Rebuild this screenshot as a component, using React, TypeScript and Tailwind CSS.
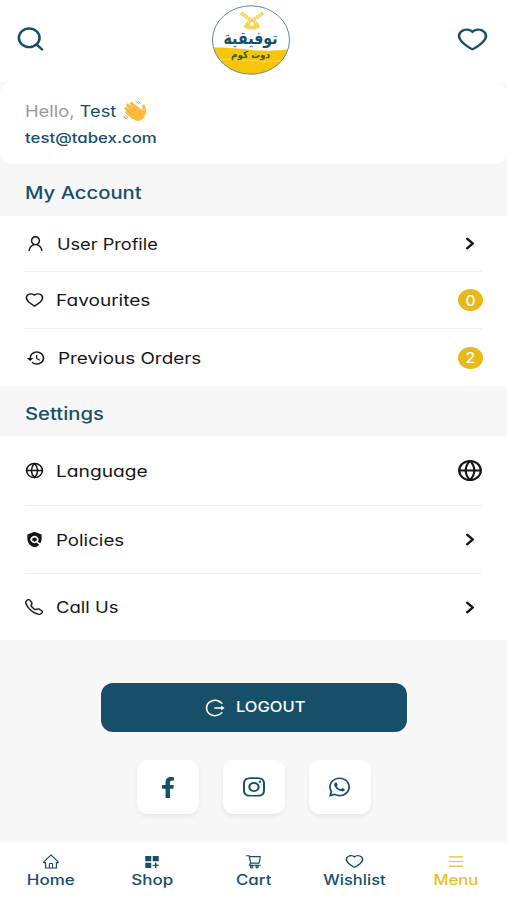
import { ReactNode } from 'react'
import type { IconType } from 'react-icons'
import { AiOutlineHeart, AiOutlineHome, AiOutlineLogout, AiOutlineMenu, AiOutlineShoppingCart, AiOutlineUser } from 'react-icons/ai'
import { BsTelephone } from 'react-icons/bs'
import { FaFacebookF, FaInstagram, FaWhatsapp } from 'react-icons/fa'
import { FiChevronRight, FiGlobe, FiSearch } from 'react-icons/fi'
import { MdDashboardCustomize, MdHistory, MdPolicy } from 'react-icons/md'

type Row = { label: string; Icon: IconType; icon: string; text: string; row: string; right: ReactNode }

const chevron = <FiChevronRight preserveAspectRatio="none" strokeWidth={3} className="w-[22px] h-[19px] mr-[1px]" />

const ACCOUNT: Row[] = [
  { label: 'User Profile', Icon: AiOutlineUser, icon: 'w-[19px] h-[19px] ml-[1px]', text: 'ml-[12px] scale-x-[1.135]', row: 'h-[56px]', right: chevron },
  { label: 'Favourites', Icon: AiOutlineHeart, icon: 'w-[21px] h-[18px] -ml-[1px]', text: 'ml-[11px] scale-x-[1.19]', row: 'h-[57px]', right: <Badge value={0} /> },
  { label: 'Previous Orders', Icon: MdHistory, icon: 'w-[20px] h-[18px] ml-[1px]', text: 'ml-[12px] scale-x-[1.18]', row: 'h-[57px]', right: <Badge value={2} /> },
]

const SETTINGS: Row[] = [
  { label: 'Language', Icon: FiGlobe, icon: 'w-[19px] h-[17px]', text: 'ml-[12px] scale-x-[1.2]', row: 'h-[70px]', right: <FiGlobe preserveAspectRatio="none" className="w-[26px] h-[23px] -mr-[1px]" /> },
  { label: 'Policies', Icon: MdPolicy, icon: 'w-[19px] h-[17px]', text: 'ml-[12px] scale-x-[1.17]', row: 'h-[68px]', right: chevron },
  { label: 'Call Us', Icon: BsTelephone, icon: 'w-[18px] h-[16px] stroke-current stroke-[0.35]', text: 'ml-[13px] scale-x-[1.155]', row: 'h-[66px]', right: chevron },
]

const TABS = [
  { label: 'Home', Icon: AiOutlineHome, icon: 'w-[18px] h-[17px]', text: 'scale-x-[1.21]' },
  { label: 'Shop', Icon: MdDashboardCustomize, icon: 'w-[18px] h-[16px]', text: 'scale-x-[1.21]' },
  { label: 'Cart', Icon: AiOutlineShoppingCart, icon: 'w-[17px] h-[17px]', text: 'scale-x-[1.21]' },
  { label: 'Wishlist', Icon: AiOutlineHeart, icon: 'w-[21px] h-[17px]', text: 'scale-x-[1.18]' },
  { label: 'Menu', Icon: AiOutlineMenu, icon: 'w-[18px] h-[15px]', text: 'scale-x-[1.18]', active: true },
]

const SOCIALS = [
  { Icon: FaFacebookF, icon: 'w-[14px] h-[21px]' },
  { Icon: FaInstagram, icon: 'w-[22px] h-[22px]' },
  { Icon: FaWhatsapp, icon: 'w-[21px] h-[22px]' },
]

export default function App() {
  return (
    <div className="w-[507px] h-[900px] flex flex-col overflow-hidden bg-[#f7f7f7] text-[#161616] font-['Inter','Liberation_Sans',sans-serif] [font-feature-settings:'cv11']">
      <header className="h-[82px] shrink-0 bg-white flex items-center justify-between pl-[15px] pr-[17px] pb-[4px] text-[#174f68]">
        <FiSearch preserveAspectRatio="none" className="w-[31px] h-[28px]" />
        <Logo />
        <AiOutlineHeart preserveAspectRatio="none" className="w-[35px] h-[29px]" />
      </header>

      <section className="h-[82px] shrink-0 bg-white rounded-[12px] px-[25px] pt-[17px] text-[#174f68]">
        <div className="flex items-center h-[24px] text-[16px]">
          <span className="w-[98px]">
            <span className="inline-block origin-left scale-x-[1.145] whitespace-nowrap"><span className="text-[#999]">Hello,</span> Test</span>
          </span>
          <WavingHand />
        </div>
        <p className="mt-[5px] text-[14px] leading-[20px] font-medium origin-left scale-x-[1.2]">test@tabex.com</p>
      </section>

      <SectionTitle className="h-[52px] pt-[7px]">My Account</SectionTitle>
      <List rows={ACCOUNT} />
      <SectionTitle className="h-[50px] pt-[7px]">Settings</SectionTitle>
      <List rows={SETTINGS} />

      <div className="flex-1 flex flex-col items-center pt-[43px]">
        <button className="w-[306px] h-[49px] rounded-[12px] bg-[#174f68] text-white flex items-center justify-center pr-[4px]">
          <AiOutlineLogout preserveAspectRatio="none" className="w-[22px] h-[20px]" />
          <span className="ml-[10px] text-[15px] font-medium origin-left scale-x-[1.1]">LOGOUT</span>
        </button>
        <div className="flex gap-[24px] mt-[28px]">
          {SOCIALS.map(({ Icon, icon }, i) => (
            <div key={i} className="w-[62px] h-[54px] rounded-[11px] bg-white flex items-center justify-center text-[#174f68] shadow-[0_3px_4px_rgba(0,0,0,0.06)]">
              <Icon preserveAspectRatio="none" className={icon} />
            </div>
          ))}
        </div>
      </div>

      <nav className="h-[58px] shrink-0 bg-white flex pt-[11px]">
        {TABS.map(({ label, Icon, icon, text, active }) => (
          <div key={label} className={`flex-1 flex flex-col items-center ${active ? 'text-[#ecbd25]' : 'text-[#174f68]'}`}>
            <span className="h-[17px] flex items-center">
              <Icon preserveAspectRatio="none" className={icon} />
            </span>
            <span className={`text-[14px] leading-[19px] font-medium ${text}`}>{label}</span>
          </div>
        ))}
      </nav>
    </div>
  )
}

function SectionTitle({ className, children }: { className: string; children: ReactNode }) {
  return (
    <div className={`shrink-0 flex items-center pl-[25px] text-[#174f68] ${className}`}>
      <h2 className="text-[17px] font-medium origin-left scale-x-[1.19]">{children}</h2>
    </div>
  )
}

function List({ rows }: { rows: Row[] }) {
  return (
    <div className="shrink-0 bg-white px-[25px]">
      {rows.map(({ label, Icon, icon, text, row, right }, i) => (
        <div key={label} className={`flex items-center ${row} ${i < rows.length - 1 ? 'border-b border-[#eeeeee]' : ''}`}>
          <Icon preserveAspectRatio="none" className={icon} />
          <span className={`text-[16px] origin-left ${text}`}>{label}</span>
          <span className="ml-auto">{right}</span>
        </div>
      ))}
    </div>
  )
}

function Badge({ value }: { value: number }) {
  return (
    <span className="flex w-[25px] h-[22px] -mr-[1px] items-center justify-center rounded-[50%] bg-[#e9b91c] text-white text-[14px] font-medium">
      <span className="scale-x-[1.12]">{value}</span>
    </span>
  )
}

function Logo() {
  return (
    <svg viewBox="0 0 80 72" className="w-[80px] h-[72px] mt-[2px]">
      <clipPath id="badge"><ellipse cx="40" cy="36" rx="38.5" ry="34.2" /></clipPath>
      <g clipPath="url(#badge)">
        <rect width="80" height="72" fill="#fff" />
        <path d="M0 43.500C20 43 34 46 50 46.500S70 46 80 45.500V72H0Z" fill="#f8c50b" />
        <path d="M4 55Q28 56 48 57T78 55.500" fill="none" stroke="#ffdc63" strokeWidth="0.8" />
      </g>
      <ellipse cx="40" cy="36" rx="38.500" ry="34.200" fill="none" stroke="#5c8d91" strokeWidth="1" />
      <g stroke="#f8d35c" strokeWidth="3.800" fill="none" strokeDasharray="2.400 .5">
        <path d="M30 9L47 21M52 9L35 21" />
      </g>
      <path d="M32 23L35 19H47L49 23Q41 28 32 23Z" fill="#f8d35c" />
      <circle cx="41" cy="20" r="2" fill="#fff" />
      <text x="39.500" y="40" textAnchor="middle" textLength="54" lengthAdjust="spacingAndGlyphs" fontSize="17" fontWeight="700" fontFamily="'DejaVu Sans', sans-serif" fill="#174f68">توفيقية</text>
      <text x="39.500" y="54" textAnchor="middle" textLength="39" lengthAdjust="spacingAndGlyphs" fontSize="10" fontWeight="700" fontFamily="'DejaVu Sans', sans-serif" fill="#39592f">دوت كوم</text>
    </svg>
  )
}

function WavingHand() {
  return (
    <svg viewBox="0 0 24 22" className="w-[24px] h-[22px]" fill="none" strokeLinecap="round">
      <path d="M7 8L14 6L18 10L22 8Q23.500 16 19.500 19Q15 23 10.500 19L6 14Z" fill="#fbbd3b" />
      <g stroke="#fbbd3b" strokeWidth="3">
        <path d="M4 12.500L10 17.500M2.800 8.500L11 15M4.500 5L13 12M8.500 3.500L16 10M20.500 6Q22 9 21.500 13" />
      </g>
      <path d="M4.500 10.800L9.500 14.500M5 7.500L11 12M8 5.500L13 10M18 9Q14.500 12 16.500 15.500" stroke="#e59a2b" strokeWidth=".6" />
      <path d="M13 1.500Q15 2 15.500 4M15 1Q17 1.500 17.300 3.500M1 16Q1.500 18.500 4 19M2.800 15.500Q3 17 4.800 17.500" stroke="#888" strokeWidth=".8" />
    </svg>
  )
}
